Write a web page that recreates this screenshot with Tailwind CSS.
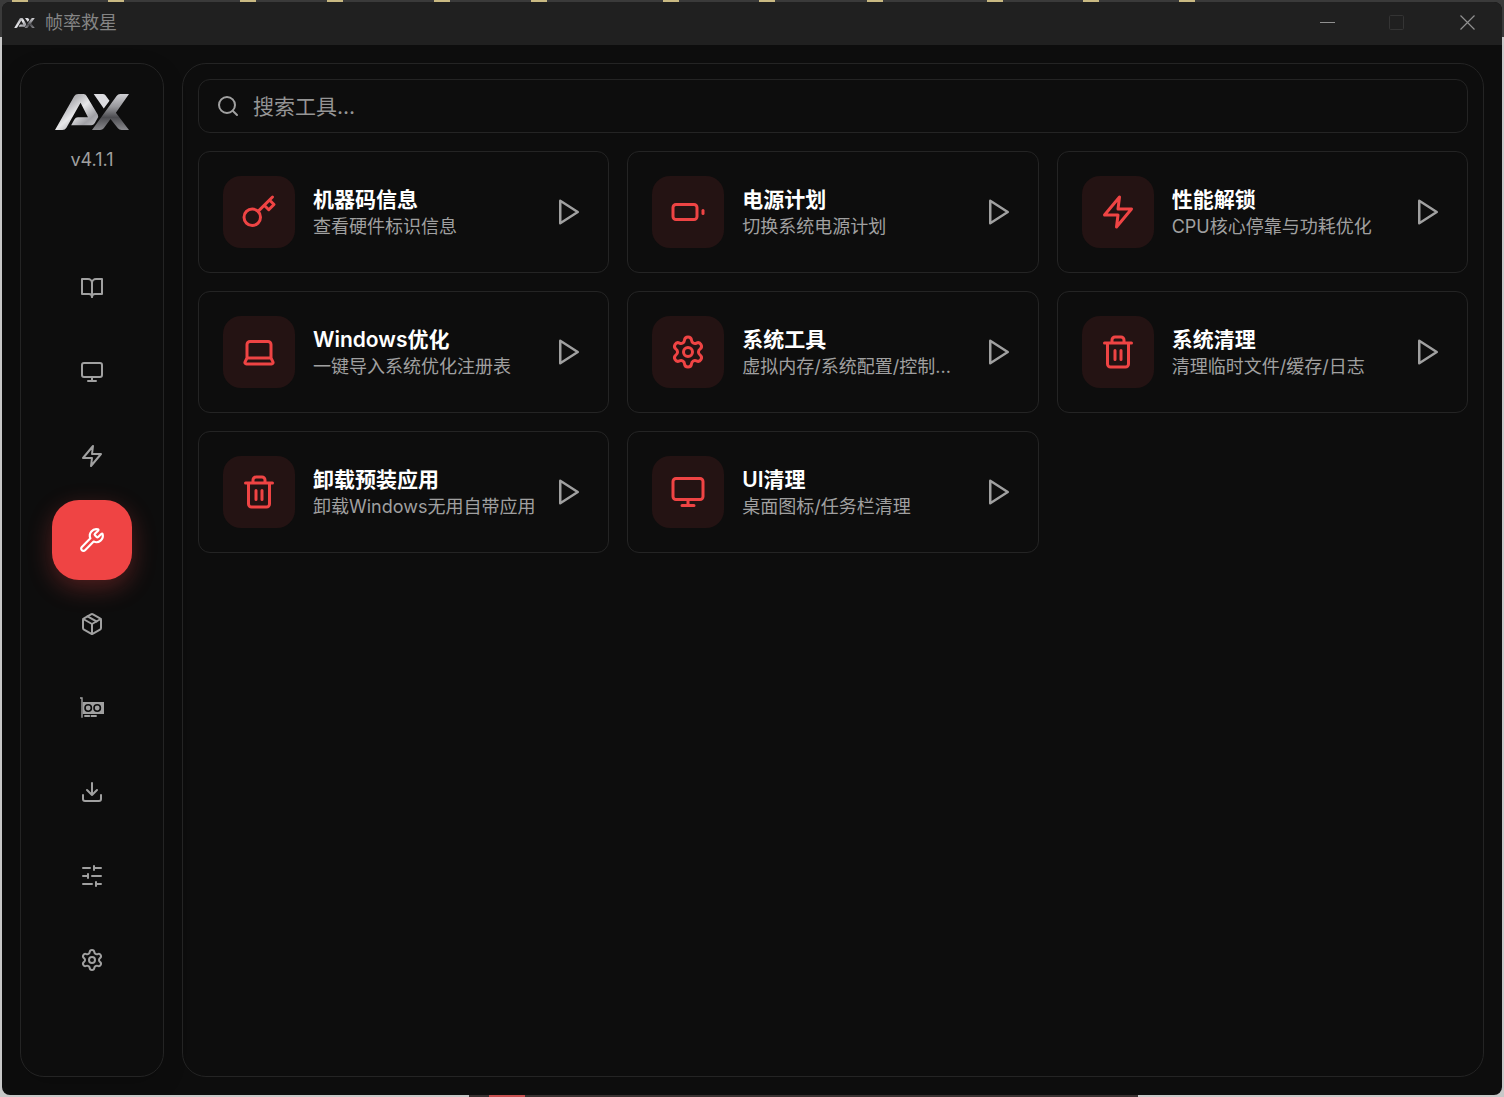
<!DOCTYPE html>
<html lang="zh-CN">
<head>
<meta charset="utf-8">
<meta name="viewport" content="width=device-width, initial-scale=1">
<title>帧率救星</title>
<script src="https://cdn.jsdelivr.net/npm/@tailwindcss/browser@4"></script>
</head>
<body class="relative flex min-h-screen flex-col bg-[#c8c8c8] bg-[linear-gradient(#3a3a3a,#3a3a3a)] bg-[length:100%_37px] bg-no-repeat p-0.5 font-['Inter','Noto_Sans_CJK_SC',sans-serif]">

<!-- desktop showing behind the window -->
<div class="absolute inset-x-0 top-0 h-0.5 overflow-hidden" aria-hidden="true">
  <i class="absolute left-[12px] h-0.5 w-4 bg-[#c9b982]"></i>
  <i class="absolute left-[108px] h-0.5 w-4 bg-[#c9b982]"></i>
  <i class="absolute left-[240px] h-0.5 w-4 bg-[#c9b982]"></i>
  <i class="absolute left-[327px] h-0.5 w-4 bg-[#c9b982]"></i>
  <i class="absolute left-[434px] h-0.5 w-4 bg-[#c9b982]"></i>
  <i class="absolute left-[531px] h-0.5 w-4 bg-[#c9b982]"></i>
  <i class="absolute left-[663px] h-0.5 w-4 bg-[#c9b982]"></i>
  <i class="absolute left-[759px] h-0.5 w-4 bg-[#c9b982]"></i>
  <i class="absolute left-[867px] h-0.5 w-4 bg-[#c9b982]"></i>
  <i class="absolute left-[987px] h-0.5 w-4 bg-[#c9b982]"></i>
  <i class="absolute left-[1083px] h-0.5 w-4 bg-[#c9b982]"></i>
  <i class="absolute left-[1179px] h-0.5 w-4 bg-[#c9b982]"></i>
</div>
<div class="absolute bottom-0 left-[469px] h-0.5 w-[669px] bg-[#3a3232]" aria-hidden="true">
  <i class="absolute left-5 h-0.5 w-9 bg-[#c85050]"></i>
</div>

<svg class="absolute size-0" aria-hidden="true">
  <defs>
    <linearGradient id="metalA" x1="0" y1="0" x2="1" y2="1">
      <stop offset="0" stop-color="#8e8e93"/><stop offset=".3" stop-color="#b4b4b8"/><stop offset=".5" stop-color="#e8e8ea"/><stop offset=".75" stop-color="#a0a0a5"/><stop offset="1" stop-color="#d2d2d6"/>
    </linearGradient>
    <linearGradient id="metalX" x1="0" y1="0" x2="0" y2="1">
      <stop offset="0" stop-color="#cfcfd3"/><stop offset=".35" stop-color="#98989c"/><stop offset=".65" stop-color="#4c4c50"/><stop offset="1" stop-color="#8a8a8e"/>
    </linearGradient>
    <symbol id="logo" viewBox="160 283 220 107">
      <path fill="url(#metalA)" d="M160 390 217 290Q221 283 229 283H245Q251 283 254 289L287 344Q290 350 286 356L278 370Q274 376 268 376H208L218 358Q221 352 228 352H258L236 309 194 383Q190 390 182 390Z"/>
      <path fill="#dcdce0" d="M275 283H302Q307 283 310 287L322 303 305 326Z"/>
      <path fill="url(#metalX)" d="M380 283 341 339 380 390H358Q351 390 347 385L325 357 305 385Q301 390 294 390H270L343 289Q347 283 354 283Z"/>
    </symbol>
    <symbol id="book" viewBox="0 0 24 24"><path d="M2 3h6a4 4 0 0 1 4 4v14a3 3 0 0 0-3-3H2z"/><path d="M22 3h-6a4 4 0 0 0-4 4v14a3 3 0 0 1 3-3h7z"/></symbol>
    <symbol id="monitor" viewBox="0 0 24 24"><rect x="2" y="3" width="20" height="14" rx="2"/><path d="M8 21h8M12 17v4"/></symbol>
    <symbol id="zap" viewBox="0 0 24 24"><path d="M13 2 3 14h9l-1 8 10-12h-9l1-8z"/></symbol>
    <symbol id="wrench" viewBox="0 0 24 24"><path d="M14.7 6.3a1 1 0 0 0 0 1.4l1.6 1.6a1 1 0 0 0 1.4 0l3.106-3.105c.32-.322.863-.22.983.218a6 6 0 0 1-8.259 7.057l-7.91 7.91a1 1 0 0 1-2.999-3l7.91-7.91a6 6 0 0 1 7.057-8.259c.438.12.54.662.219.984z"/></symbol>
    <symbol id="package" viewBox="0 0 24 24"><path d="m7.5 4.27 9 5.15"/><path d="M21 8a2 2 0 0 0-1-1.73l-7-4a2 2 0 0 0-2 0l-7 4A2 2 0 0 0 3 8v8a2 2 0 0 0 1 1.73l7 4a2 2 0 0 0 2 0l7-4A2 2 0 0 0 21 16Z"/><path d="m3.3 7 8.7 5 8.7-5M12 22V12"/></symbol>
    <symbol id="gpu" viewBox="0 0 24 24"><g fill="currentColor" stroke="none"><path d="M0 1.3h2.7v20.5H1.3V2.7H0z"/><path fill-rule="evenodd" d="M2.7 6H24v12H2.7zM8.2 8a4 4 0 1 0 0 8 4 4 0 0 0 0-8zm9 0a4 4 0 1 0 0 8 4 4 0 0 0 0-8z"/><circle cx="8.2" cy="12" r="2.4"/><circle cx="17.2" cy="12" r="2.4"/><path d="M4.3 19h5.6v2H4.3zM10.7 19h6v2h-6z"/></g></symbol>
    <symbol id="download" viewBox="0 0 24 24"><path d="M21 15v4a2 2 0 0 1-2 2H5a2 2 0 0 1-2-2v-4M7 10l5 5 5-5M12 15V3"/></symbol>
    <symbol id="sliders" viewBox="0 0 24 24"><path d="M21 4h-7M10 4H3M21 12h-9M8 12H3M21 20h-5M12 20H3M14 2v4M8 10v4M16 18v4"/></symbol>
    <symbol id="gear" viewBox="0 0 24 24"><path d="M9.671 4.136a2.34 2.34 0 0 1 4.659 0 2.34 2.34 0 0 0 3.319 1.915 2.34 2.34 0 0 1 2.33 4.033 2.34 2.34 0 0 0 0 3.831 2.34 2.34 0 0 1-2.33 4.033 2.34 2.34 0 0 0-3.319 1.915 2.34 2.34 0 0 1-4.659 0 2.34 2.34 0 0 0-3.32-1.915 2.34 2.34 0 0 1-2.33-4.033 2.34 2.34 0 0 0 0-3.831A2.34 2.34 0 0 1 6.35 6.051a2.34 2.34 0 0 0 3.319-1.915"/><circle cx="12" cy="12" r="3"/></symbol>
    <symbol id="key" viewBox="0 0 24 24"><circle cx="7.5" cy="15.5" r="5.5"/><path d="m21 2-9.6 9.6M15.5 7.5l3 3L22 7l-3-3"/></symbol>
    <symbol id="battery" viewBox="0 0 24 24"><rect x="2" y="7" width="16" height="10" rx="2"/><path d="M22 11v2"/></symbol>
    <symbol id="laptop" viewBox="0 0 24 24"><path d="M20 16V7a2 2 0 0 0-2-2H6a2 2 0 0 0-2 2v9m16 0H4m16 0 1.28 2.55a1 1 0 0 1-.9 1.45H3.62a1 1 0 0 1-.9-1.45L4 16"/></symbol>
    <symbol id="trash" viewBox="0 0 24 24"><path d="M3 6h18M19 6v14a2 2 0 0 1-2 2H7a2 2 0 0 1-2-2V6M8 6V4a2 2 0 0 1 2-2h4a2 2 0 0 1 2 2v2M10 11v6M14 11v6"/></symbol>
    <symbol id="play" viewBox="0 0 24 24"><path d="m5 3 14 9-14 9z"/></symbol>
    <symbol id="search" viewBox="0 0 24 24"><circle cx="11" cy="11" r="8"/><path d="m21 21-4.3-4.3"/></symbol>
  </defs>
</svg>

<div class="relative flex grow flex-col overflow-hidden rounded-lg bg-[#0d0d0d]">
  <header class="flex h-[43px] items-center bg-[#202020] pb-px pl-3">
    <svg class="h-2.5 w-[21px]" aria-hidden="true"><use href="#logo"/></svg>
    <h1 class="ml-2.5 grow text-lg leading-6 text-[#858585]">帧率救星</h1>
    <button class="flex h-full w-[70px] items-center justify-center text-[#909090]" aria-label="最小化"><svg class="size-4" viewBox="0 0 16 16" stroke="currentColor"><path d="M1 7.500h15"/></svg></button>
    <button class="flex h-full w-[70px] items-center justify-center text-[#343434]" aria-label="最大化" disabled><svg class="size-4" viewBox="0 0 16 16" fill="none" stroke="currentColor"><rect x=".5" y=".5" width="14" height="14" rx="1"/></svg></button>
    <button class="flex h-full w-[70px] items-center justify-center text-[#909090]" aria-label="关闭"><svg class="size-4" viewBox="0 0 16 16" stroke="currentColor" stroke-width="1.200"><path d="m1.500.5 14 14M15.500.5l-14 14"/></svg></button>
  </header>

  <div class="flex grow gap-[18px] p-[18px]">
    <aside class="flex w-36 shrink-0 flex-col items-center rounded-3xl border border-[#242424] pt-[30px] shadow-[0_8px_24px_rgba(0,0,0,0.15)]">
      <svg class="h-9 w-[74px]" role="img" aria-label="AX"><use href="#logo"/></svg>
      <p class="mt-[18px] text-lg leading-6 text-[#a0a0a0]">v4.1.1</p>
      <nav class="mt-[76px] flex flex-col gap-1 fill-none stroke-current stroke-2 text-[#a0a0a0] [stroke-linecap:round] [stroke-linejoin:round]">
        <a href="#guide" aria-label="教程" class="flex size-20 items-center justify-center rounded-[27px]"><svg class="size-6"><use href="#book"/></svg></a>
        <a href="#system" aria-label="系统" class="flex size-20 items-center justify-center rounded-[27px]"><svg class="size-6"><use href="#monitor"/></svg></a>
        <a href="#boost" aria-label="加速" class="flex size-20 items-center justify-center rounded-[27px]"><svg class="size-6"><use href="#zap"/></svg></a>
        <a href="#tools" aria-label="工具" aria-current="page" class="flex size-20 items-center justify-center rounded-[27px] bg-[#ef4444] text-white shadow-[0_8px_24px_rgba(239,68,68,0.3)]"><svg class="size-[26px]"><use href="#wrench"/></svg></a>
        <a href="#packages" aria-label="组件" class="flex size-20 items-center justify-center rounded-[27px]"><svg class="size-6"><use href="#package"/></svg></a>
        <a href="#gpu-page" aria-label="显卡" class="flex size-20 items-center justify-center rounded-[27px]"><svg class="size-6"><use href="#gpu"/></svg></a>
        <a href="#downloads" aria-label="下载" class="flex size-20 items-center justify-center rounded-[27px]"><svg class="size-6"><use href="#download"/></svg></a>
        <a href="#tuning" aria-label="调节" class="flex size-20 items-center justify-center rounded-[27px]"><svg class="size-6"><use href="#sliders"/></svg></a>
        <a href="#settings" aria-label="设置" class="flex size-20 items-center justify-center rounded-[27px]"><svg class="size-6"><use href="#gear"/></svg></a>
      </nav>
    </aside>

    <main class="min-w-0 grow rounded-3xl border border-[#242424] p-[15px]">
      <label class="flex h-[54px] items-center gap-[13px] rounded-xl border border-[#242424] px-[17px] text-[#a0a0a0]">
        <svg class="size-6 shrink-0 fill-none stroke-current stroke-2 [stroke-linecap:round]" aria-hidden="true"><use href="#search"/></svg>
        <input type="search" aria-label="搜索工具" placeholder="搜索工具..." class="min-w-0 grow bg-transparent pt-0.5 text-[21px] leading-8 text-white outline-none placeholder:text-[#959595]">
      </label>

      <div class="mt-[18px] grid grid-cols-3 gap-[18px] [stroke-linecap:round] [stroke-linejoin:round]">
        <button class="flex items-center gap-[18px] rounded-xl border border-[#242424] p-6 text-left">
          <span class="flex size-[72px] shrink-0 items-center justify-center rounded-[18px] bg-[#241313] text-[#ef4444]"><svg class="size-9 fill-none stroke-current stroke-2"><use href="#key"/></svg></span>
          <span class="min-w-0 grow pt-0.5"><span class="block truncate text-[21px] leading-7 font-semibold text-white">机器码信息</span><span class="block truncate text-lg leading-[26px] text-[#a0a0a0]">查看硬件标识信息</span></span>
          <svg class="size-[30px] shrink-0 fill-none stroke-current stroke-2 text-[#a0a0a0]"><use href="#play"/></svg>
        </button>
        <button class="flex items-center gap-[18px] rounded-xl border border-[#242424] p-6 text-left">
          <span class="flex size-[72px] shrink-0 items-center justify-center rounded-[18px] bg-[#241313] text-[#ef4444]"><svg class="size-9 fill-none stroke-current stroke-2"><use href="#battery"/></svg></span>
          <span class="min-w-0 grow pt-0.5"><span class="block truncate text-[21px] leading-7 font-semibold text-white">电源计划</span><span class="block truncate text-lg leading-[26px] text-[#a0a0a0]">切换系统电源计划</span></span>
          <svg class="size-[30px] shrink-0 fill-none stroke-current stroke-2 text-[#a0a0a0]"><use href="#play"/></svg>
        </button>
        <button class="flex items-center gap-[18px] rounded-xl border border-[#242424] p-6 text-left">
          <span class="flex size-[72px] shrink-0 items-center justify-center rounded-[18px] bg-[#241313] text-[#ef4444]"><svg class="size-9 fill-none stroke-current stroke-2"><use href="#zap"/></svg></span>
          <span class="min-w-0 grow pt-0.5"><span class="block truncate text-[21px] leading-7 font-semibold text-white">性能解锁</span><span class="block truncate text-lg leading-[26px] text-[#a0a0a0]">CPU核心停靠与功耗优化</span></span>
          <svg class="size-[30px] shrink-0 fill-none stroke-current stroke-2 text-[#a0a0a0]"><use href="#play"/></svg>
        </button>
        <button class="flex items-center gap-[18px] rounded-xl border border-[#242424] p-6 text-left">
          <span class="flex size-[72px] shrink-0 items-center justify-center rounded-[18px] bg-[#241313] text-[#ef4444]"><svg class="size-9 fill-none stroke-current stroke-2"><use href="#laptop"/></svg></span>
          <span class="min-w-0 grow pt-0.5"><span class="block truncate text-[21px] leading-7 font-semibold text-white">Windows优化</span><span class="block truncate text-lg leading-[26px] text-[#a0a0a0]">一键导入系统优化注册表</span></span>
          <svg class="size-[30px] shrink-0 fill-none stroke-current stroke-2 text-[#a0a0a0]"><use href="#play"/></svg>
        </button>
        <button class="flex items-center gap-[18px] rounded-xl border border-[#242424] p-6 text-left">
          <span class="flex size-[72px] shrink-0 items-center justify-center rounded-[18px] bg-[#241313] text-[#ef4444]"><svg class="size-9 fill-none stroke-current stroke-2"><use href="#gear"/></svg></span>
          <span class="min-w-0 grow pt-0.5"><span class="block truncate text-[21px] leading-7 font-semibold text-white">系统工具</span><span class="block truncate text-lg leading-[26px] text-[#a0a0a0]">虚拟内存/系统配置/控制...</span></span>
          <svg class="size-[30px] shrink-0 fill-none stroke-current stroke-2 text-[#a0a0a0]"><use href="#play"/></svg>
        </button>
        <button class="flex items-center gap-[18px] rounded-xl border border-[#242424] p-6 text-left">
          <span class="flex size-[72px] shrink-0 items-center justify-center rounded-[18px] bg-[#241313] text-[#ef4444]"><svg class="size-9 fill-none stroke-current stroke-2"><use href="#trash"/></svg></span>
          <span class="min-w-0 grow pt-0.5"><span class="block truncate text-[21px] leading-7 font-semibold text-white">系统清理</span><span class="block truncate text-lg leading-[26px] text-[#a0a0a0]">清理临时文件/缓存/日志</span></span>
          <svg class="size-[30px] shrink-0 fill-none stroke-current stroke-2 text-[#a0a0a0]"><use href="#play"/></svg>
        </button>
        <button class="flex items-center gap-[18px] rounded-xl border border-[#242424] p-6 text-left">
          <span class="flex size-[72px] shrink-0 items-center justify-center rounded-[18px] bg-[#241313] text-[#ef4444]"><svg class="size-9 fill-none stroke-current stroke-2"><use href="#trash"/></svg></span>
          <span class="min-w-0 grow pt-0.5"><span class="block truncate text-[21px] leading-7 font-semibold text-white">卸载预装应用</span><span class="block truncate text-lg leading-[26px] text-[#a0a0a0]">卸载Windows无用自带应用</span></span>
          <svg class="size-[30px] shrink-0 fill-none stroke-current stroke-2 text-[#a0a0a0]"><use href="#play"/></svg>
        </button>
        <button class="flex items-center gap-[18px] rounded-xl border border-[#242424] p-6 text-left">
          <span class="flex size-[72px] shrink-0 items-center justify-center rounded-[18px] bg-[#241313] text-[#ef4444]"><svg class="size-9 fill-none stroke-current stroke-2"><use href="#monitor"/></svg></span>
          <span class="min-w-0 grow pt-0.5"><span class="block truncate text-[21px] leading-7 font-semibold text-white">UI清理</span><span class="block truncate text-lg leading-[26px] text-[#a0a0a0]">桌面图标/任务栏清理</span></span>
          <svg class="size-[30px] shrink-0 fill-none stroke-current stroke-2 text-[#a0a0a0]"><use href="#play"/></svg>
        </button>
      </div>
    </main>
  </div>
</div>
</body>
</html>
